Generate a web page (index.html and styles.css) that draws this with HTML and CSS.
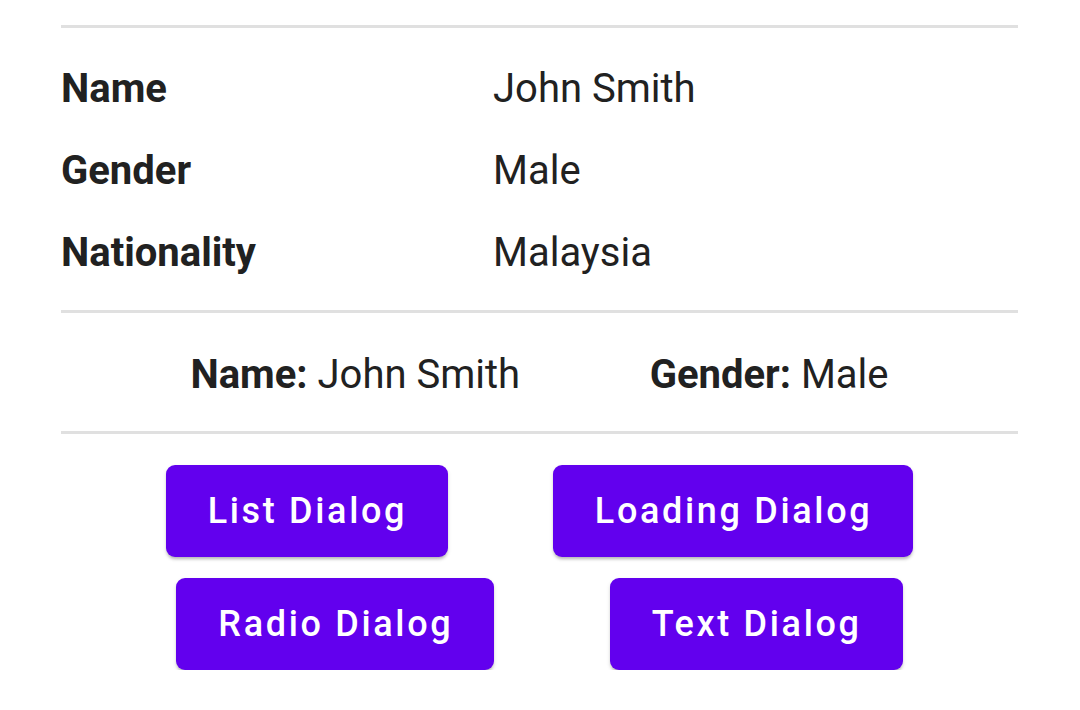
FILE: index.html
```html
<!DOCTYPE html>
<html>
<head>
<meta charset="utf-8">
<link rel="stylesheet" href="styles.css">
</head>
<body>
<div class="page">
  <hr class="divider">
  <div class="table">
    <div class="label">Name</div><div class="value">John Smith</div>
    <div class="label">Gender</div><div class="value">Male</div>
    <div class="label">Nationality</div><div class="value">Malaysia</div>
  </div>
  <hr class="divider">
  <div class="inline-row">
    <div class="pair"><b>Name:</b> John Smith</div>
    <div class="pair"><b>Gender:</b> Male</div>
  </div>
  <hr class="divider">
  <div class="buttons">
    <div class="btn-row">
      <button class="btn">List Dialog</button>
      <button class="btn">Loading Dialog</button>
    </div>
    <div class="btn-row">
      <button class="btn">Radio Dialog</button>
      <button class="btn">Text Dialog</button>
    </div>
  </div>
</div>
</body>
</html>
```

FILE: styles.css
```css
html, body {
  margin: 0;
  padding: 0;
  background: #ffffff;
}
body {
  font-family: Roboto, "Liberation Sans", sans-serif;
  color: #212121;
  font-size: 40px;
}
.page {
  padding: 25px 62px 0 61px;
}
.divider {
  border: 0;
  height: 3px;
  background: #e0e0e0;
  margin: 0;
}
.table {
  display: grid;
  grid-template-columns: 432px 1fr;
  row-gap: 36px;
  margin: 38px 0 34px;
  line-height: 46px;
}
.label {
  font-weight: 700;
}
.inline-row {
  display: flex;
  justify-content: space-evenly;
  margin: 39px 0 33px;
  line-height: 46px;
}
.pair b {
  font-weight: 700;
}
.buttons {
  display: flex;
  flex-direction: column;
  gap: 21px;
  margin-top: 31px;
}
.btn-row {
  display: flex;
  justify-content: space-evenly;
}
.btn {
  font-family: Roboto, "Liberation Sans", sans-serif;
  font-size: 36px;
  font-weight: 500;
  letter-spacing: 0.074em;
  color: #ffffff;
  background: #6200ee;
  border: 0;
  border-radius: 9px;
  height: 92px;
  padding: 0 41px 0 42px;
  box-shadow: 0 3px 3px -1px rgba(0,0,0,0.2), 0 2px 4px rgba(0,0,0,0.12);
}
```
